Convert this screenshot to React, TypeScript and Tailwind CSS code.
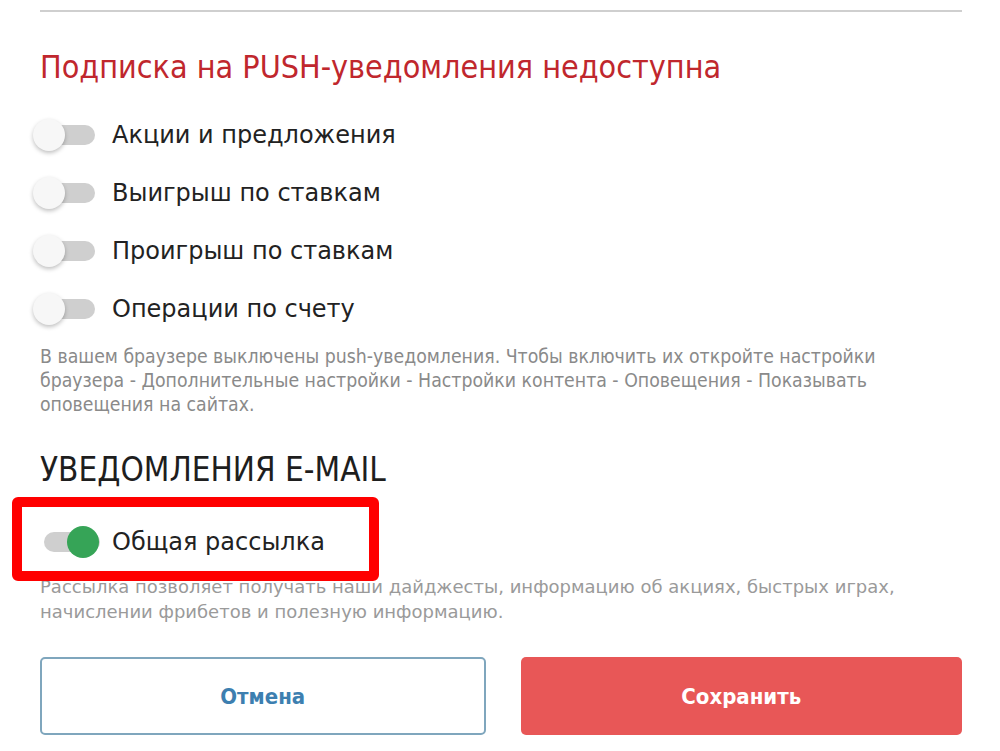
import { useState } from 'react'

const narrow = { fontFamily: "'DejaVu Sans Condensed', 'Liberation Sans Narrow', sans-serif" }
const wide = { fontFamily: "'DejaVu Sans', Verdana, sans-serif" }

function Toggle({ on, onChange }: { on: boolean; onChange: () => void }) {
  return (
    <button
      onClick={onChange}
      className="relative w-[62px] h-[32px] flex items-center shrink-0"
    >
      <span className="block w-[56px] h-[20px] ml-[6px] rounded-full bg-[#cfcfcf]" />
      <span
        className={`absolute top-0 w-[32px] h-[32px] rounded-full ${
          on ? 'left-[29px] bg-[#36a457]' : 'left-0 bg-[#f7f7f7] shadow-[0_2px_4px_rgba(0,0,0,0.25)]'
        }`}
      />
    </button>
  )
}

export default function App() {
  const [push, setPush] = useState([false, false, false, false])
  const [mail, setMail] = useState(true)

  const items = ['Акции и предложения', 'Выигрыш по ставкам', 'Проигрыш по ставкам', 'Операции по счету']

  return (
    <div className="w-[1000px] h-[751px] bg-white overflow-hidden">
      <div className="mx-[40px] w-[922px] pt-[10px]">
        <div className="h-[2px] bg-[#cfcfcf]" />

        <h2 className="mt-[35px] text-[32px] leading-[40px] text-[#c0272d]" style={narrow}>
          Подписка на PUSH-уведомления недоступна
        </h2>

        <div className="mt-[32px] flex flex-col gap-[26px]">
          {items.map((item, i) => (
            <div key={item} className="flex items-center gap-[17px] -ml-[7px]" style={wide}>
              <Toggle on={push[i]} onChange={() => setPush(p => p.map((v, j) => (j === i ? !v : v)))} />
              <span className="text-[24px] leading-[32px] text-[#222]">{item}</span>
            </div>
          ))}
        </div>

        <p className="mt-[20px] text-[19.3px] leading-[24px] text-[#8a8a8a] w-[870px]" style={narrow}>
          В вашем браузере выключены push-уведомления. Чтобы включить их откройте настройки браузера - Дополнительные
          настройки - Настройки контента - Оповещения - Показывать оповещения на сайтах.
        </p>

        <h2 className="mt-[33px] text-[33px] leading-[40px] text-[#1e1e1e]" style={narrow}>
          УВЕДОМЛЕНИЯ E-MAIL
        </h2>

        <div className="relative mt-[36px]">
          <div className="flex items-center gap-[12px] -ml-[2px]" style={wide}>
            <Toggle on={mail} onChange={() => setMail(!mail)} />
            <span className="text-[24px] leading-[32px] text-[#222]">Общая рассылка</span>
          </div>
          <div className="absolute -left-[28px] -top-[29px] w-[367px] h-[84px] border-[10px] border-[#ff0000] rounded-[6px] pointer-events-none" />
        </div>

        <p className="mt-[16px] text-[18px] leading-[25px] text-[#9a9a9a]" style={wide}>
          Рассылка позволяет получать наши дайджесты, информацию об акциях, быстрых играх,
          <br />
          начислении фрибетов и полезную информацию.
        </p>

        <div className="mt-[33px] flex gap-[35px]">
          <button
            className="flex-1 h-[78px] rounded-[5px] border-2 border-[#7fa6bd] bg-white text-[22px] font-bold text-[#3d7fb0]"
            style={narrow}
          >
            Отмена
          </button>
          <button
            className="flex-1 h-[78px] rounded-[5px] bg-[#e85757] text-[22px] font-bold text-white"
            style={narrow}
          >
            Сохранить
          </button>
        </div>
      </div>
    </div>
  )
}
